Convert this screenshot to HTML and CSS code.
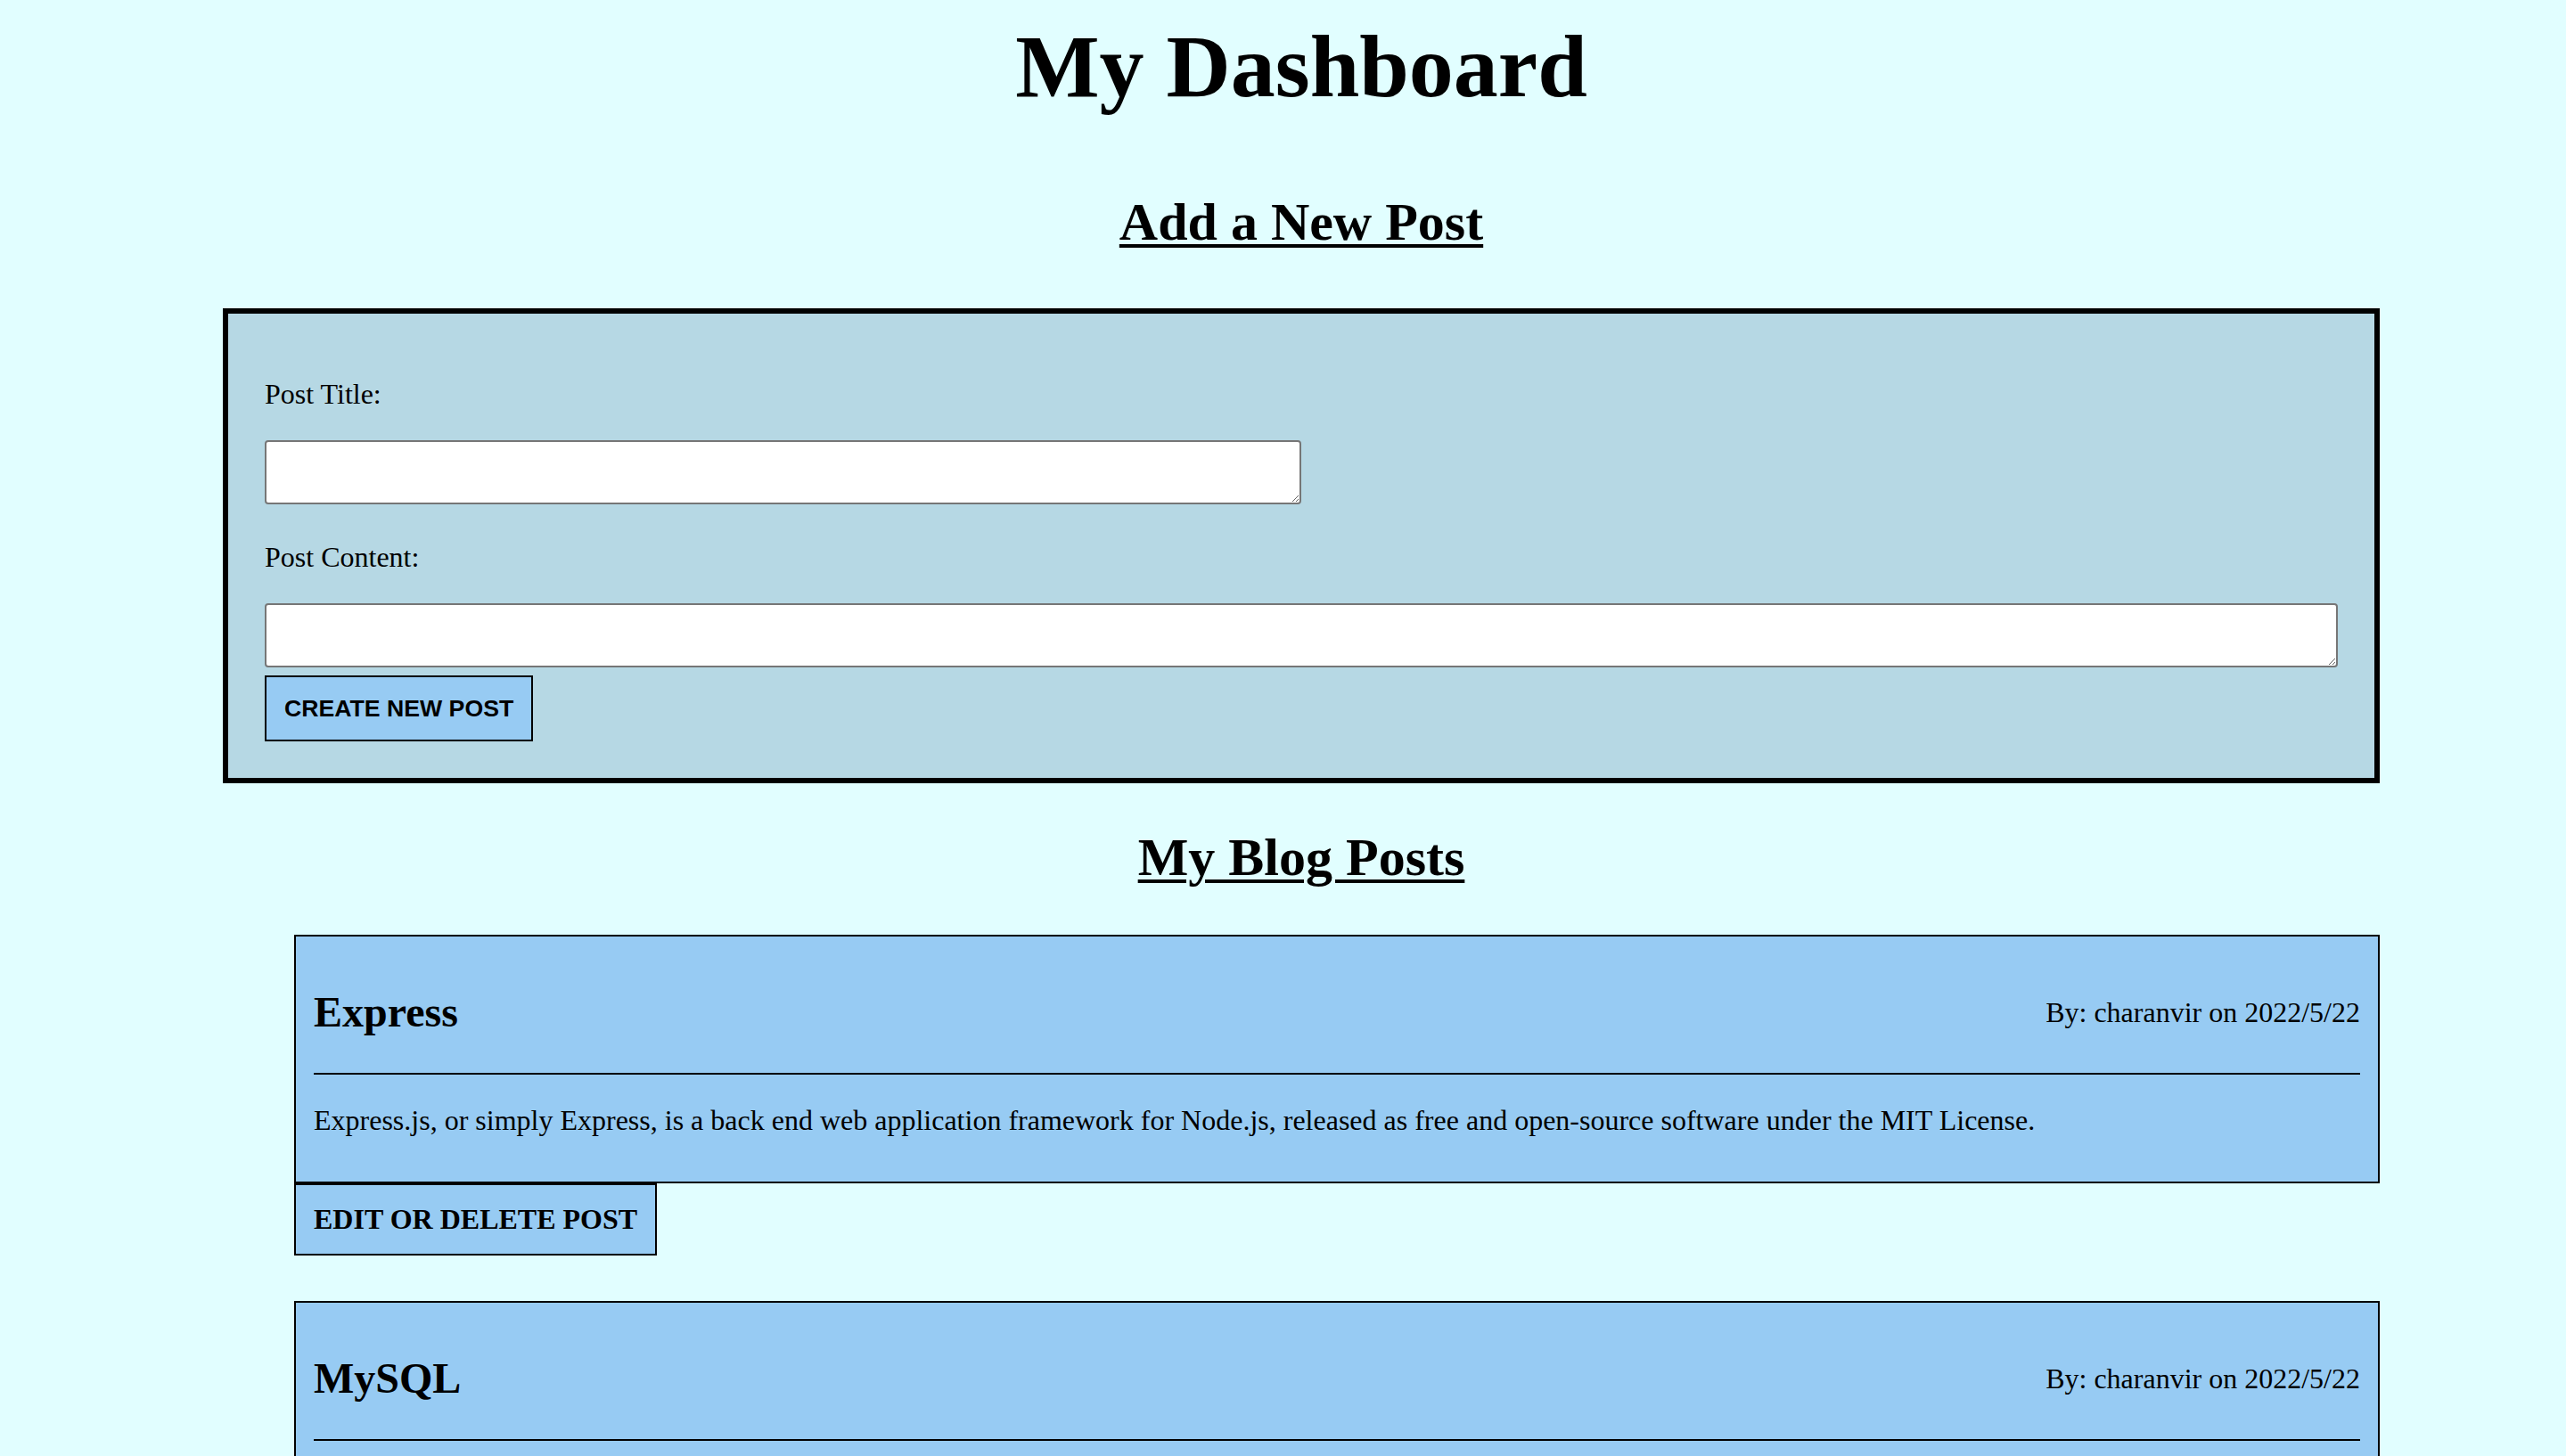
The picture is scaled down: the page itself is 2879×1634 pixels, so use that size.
FILE: index.html
```html
<!DOCTYPE html>
<html lang="en">
<head>
<meta charset="utf-8">
<title>My Dashboard</title>
<link rel="stylesheet" href="styles.css">
</head>
<body>
  <main class="page">
    <h1 class="page-title">My Dashboard</h1>

    <h2 class="section-title section-title--first">Add a New Post</h2>
    <form class="new-post">
      <label class="field-label" for="post-title">Post Title:</label>
      <textarea id="post-title" class="field field--half"></textarea>
      <label class="field-label field-label--second" for="post-content">Post Content:</label>
      <textarea id="post-content" class="field"></textarea>
      <button type="button" class="create-btn">CREATE NEW POST</button>
    </form>

    <h2 class="section-title section-title--posts">My Blog Posts</h2>
    <section class="posts">
      <article class="post">
        <div class="post-card">
          <header class="post-header">
            <h3 class="post-title">Express</h3>
            <p class="post-meta">By: charanvir on 2022/5/22</p>
          </header>
          <hr class="post-rule">
          <p class="post-body">Express.js, or simply Express, is a back end web application framework for Node.js, released as free and open-source software under the MIT License.</p>
        </div>
        <button type="button" class="edit-btn">EDIT OR DELETE POST</button>
      </article>

      <article class="post">
        <div class="post-card">
          <header class="post-header">
            <h3 class="post-title">MySQL</h3>
            <p class="post-meta">By: charanvir on 2022/5/22</p>
          </header>
          <hr class="post-rule">
          <p class="post-body">MySQL is an open-source relational database management system.</p>
        </div>
        <button type="button" class="edit-btn">EDIT OR DELETE POST</button>
      </article>
    </section>
  </main>
</body>
</html>
```

FILE: styles.css
```css
html, body {
  margin: 0;
  padding: 0;
}

body {
  background: #e1feff;
  color: #000;
  font-family: "Liberation Serif", "Times New Roman", Times, serif;
  font-size: 32px;
  line-height: 37px;
}

.page {
  padding-left: 41px;
  padding-bottom: 60px;
}

.page-title {
  margin: 17px 0 0;
  font-size: 100px;
  line-height: 115px;
  font-weight: 700;
  text-align: center;
}

.section-title {
  margin: 0;
  font-size: 60px;
  line-height: 69px;
  font-weight: 700;
  text-align: center;
  text-decoration: underline;
  text-decoration-thickness: 4px;
  text-underline-offset: 5px;
}

.section-title--first {
  margin-top: 83px;
  margin-bottom: 62px;
}

.section-title--posts {
  margin-top: 49px;
  margin-bottom: 52px;
}

/* New post form */
.new-post {
  box-sizing: border-box;
  width: 2420px;
  margin: 0 auto;
  padding: 40px 41px 41px;
  background: #b6d8e4;
  border: 6px solid #000;
  display: flex;
  flex-direction: column;
  align-items: flex-start;
}

.field-label {
  display: block;
  margin-top: 32px;
  font-size: 32px;
  line-height: 37px;
}

.field-label--second {
  margin-top: 41px;
}

.field {
  box-sizing: border-box;
  display: block;
  width: 100%;
  height: 72px;
  margin-top: 33px;
  background: #fff;
  border: 2px solid #767676;
  border-radius: 4px;
  font-family: "Liberation Mono", monospace;
  font-size: 26px;
}

.field--half {
  width: 50%;
}

.create-btn {
  margin-top: 9px;
  padding: 20px;
  background: #97cbf3;
  border: 2px solid #000;
  border-radius: 0;
  font-family: "Liberation Sans", Arial, sans-serif;
  font-size: 26.67px;
  line-height: 30px;
  font-weight: 700;
  color: #000;
}

/* Posts */
.posts {
  box-sizing: border-box;
  width: 2420px;
  margin: 0 auto;
  padding-left: 80px;
}

.post {
  margin-bottom: 51px;
}

.post-card {
  background: #97cbf3;
  border: 2px solid #000;
  padding: 17px 20px 0;
}

.post-header {
  display: flex;
  justify-content: space-between;
  align-items: center;
}

.post-title {
  margin: 40px 0 41px;
  font-size: 48px;
  line-height: 55px;
  font-weight: 700;
}

.post-meta {
  margin: 0;
  font-size: 32px;
  line-height: 37px;
}

.post-rule {
  margin: 0;
  height: 2px;
  border: 0;
  background: #000;
}

.post-body {
  margin: 33px 0 50px;
  font-size: 32px;
  line-height: 37px;
}

.edit-btn {
  display: block;
  padding: 20px;
  background: #97cbf3;
  border: 2px solid #000;
  border-radius: 0;
  font-family: "Liberation Serif", "Times New Roman", Times, serif;
  font-size: 32px;
  line-height: 37px;
  font-weight: 700;
  color: #000;
}
```
